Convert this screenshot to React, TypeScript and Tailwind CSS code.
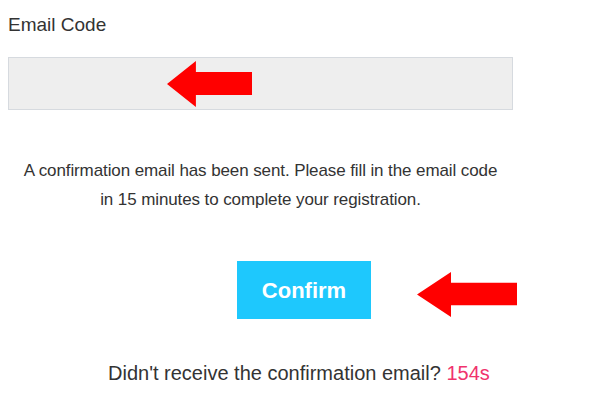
import React from 'react';

function RedArrow({ className }: { className: string }) {
  // Left-pointing red arrow used as an annotation overlay
  return (
    <svg className={className} viewBox="0 0 100 46" preserveAspectRatio="none">
      <polygon points="0,23 34,0 34,11 100,11 100,34 34,34 34,46" fill="#ff0000" />
    </svg>
  );
}

export default function App() {
  return (
    <div
      className="relative w-[612px] h-[400px] bg-white text-[#333333] overflow-hidden"
      style={{ fontFamily: '"Liberation Sans", Arial, sans-serif' }}
    >
      <div className="pl-2 pt-[11px] w-[513px]">
        {/* Label */}
        <label className="block text-[19px] leading-[28px] text-[#333]">Email Code</label>

        {/* Input */}
        <div className="mt-[18px] h-[53px] w-[505px] bg-[#eeeeee] border border-[#d6dadf]" />

        {/* Notice */}
        <p className="mt-[46px] text-center text-[17px] leading-[29px] text-[#333] tracking-[-0.1px]">
          A confirmation email has been sent. Please fill in the email code
          <br />
          in 15 minutes to complete your registration.
        </p>
      </div>

      {/* Confirm button */}
      <div className="mt-[47px] pl-[237px]">
        <button className="w-[134px] h-[58px] bg-[#1ec8fd] text-white text-[22px] font-bold">
          Confirm
        </button>
      </div>

      {/* Resend line */}
      <p className="mt-[43px] pl-[108px] text-[20px] leading-[22px] text-[#333]">
        Didn't receive the confirmation email? <span className="text-[#f0336d]">154s</span>
      </p>

      {/* Annotation arrows */}
      <RedArrow className="absolute left-[167px] top-[61px] w-[85px] h-[46px]" />
      <RedArrow className="absolute left-[417px] top-[272px] w-[100px] h-[45px]" />
    </div>
  );
}
